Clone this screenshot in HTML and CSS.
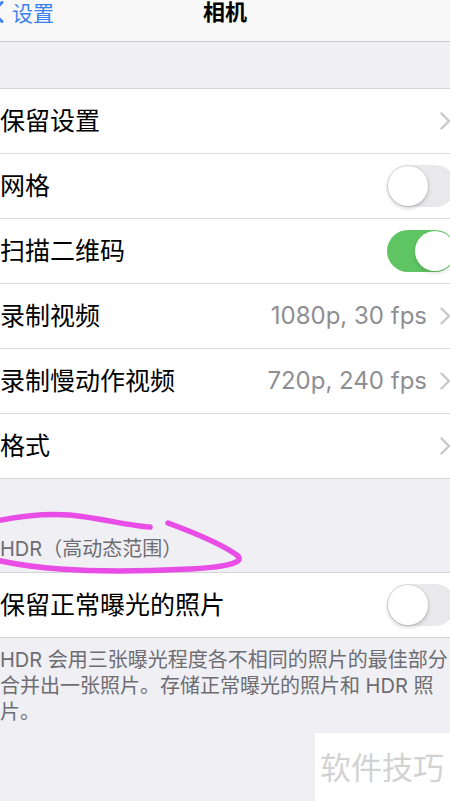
FILE: index.html
```html
<!DOCTYPE html>
<html lang="zh-CN">

<head>
    <meta charset="UTF-8">
    <meta name="viewport" content="width=device-width, initial-scale=1.0">
    <title>相机</title>
    <link rel="stylesheet" href="styles.css">
</head>

<body>
    <div class="screen">
        <header class="navbar">
            <a class="back" href="#">
                <svg class="back-chevron" width="13" height="22" viewBox="0 0 13 22">
                    <path d="M11 1.5 L1.5 11 L11 20.5" fill="none" stroke="#3b82f0" stroke-width="3" stroke-linecap="round" stroke-linejoin="round" />
                </svg>
                设置
            </a>
            <h1 class="title">相机</h1>
        </header>

        <div class="gap-top"></div>

        <ul class="group">
            <li class="cell">
                <span class="label">保留设置</span>
                <span class="accessory">
                    <svg class="chevron" width="11" height="18" viewBox="0 0 11 18">
                        <path d="M1.5 1.5 L9 9 L1.5 16.5" fill="none" stroke="#c7c7cc" stroke-width="2.4" stroke-linecap="round" stroke-linejoin="round" />
                    </svg>
                </span>
            </li>
            <li class="cell">
                <span class="label">网格</span>
                <span class="switch"><span class="knob"></span></span>
            </li>
            <li class="cell">
                <span class="label">扫描二维码</span>
                <span class="switch on"><span class="knob"></span></span>
            </li>
            <li class="cell">
                <span class="label">录制视频</span>
                <span class="accessory">
                    <span class="value">1080p, 30 fps</span>
                    <svg class="chevron" width="11" height="18" viewBox="0 0 11 18">
                        <path d="M1.5 1.5 L9 9 L1.5 16.5" fill="none" stroke="#c7c7cc" stroke-width="2.4" stroke-linecap="round" stroke-linejoin="round" />
                    </svg>
                </span>
            </li>
            <li class="cell">
                <span class="label">录制慢动作视频</span>
                <span class="accessory">
                    <span class="value">720p, 240 fps</span>
                    <svg class="chevron" width="11" height="18" viewBox="0 0 11 18">
                        <path d="M1.5 1.5 L9 9 L1.5 16.5" fill="none" stroke="#c7c7cc" stroke-width="2.4" stroke-linecap="round" stroke-linejoin="round" />
                    </svg>
                </span>
            </li>
            <li class="cell">
                <span class="label">格式</span>
                <span class="accessory">
                    <svg class="chevron" width="11" height="18" viewBox="0 0 11 18">
                        <path d="M1.5 1.5 L9 9 L1.5 16.5" fill="none" stroke="#c7c7cc" stroke-width="2.4" stroke-linecap="round" stroke-linejoin="round" />
                    </svg>
                </span>
            </li>
        </ul>

        <div class="section-header">HDR（高动态范围）</div>

        <ul class="group">
            <li class="cell">
                <span class="label">保留正常曝光的照片</span>
                <span class="switch"><span class="knob"></span></span>
            </li>
        </ul>

        <p class="section-footer">HDR 会用三张曝光程度各不相同的照片的最佳部分<br>合并出一张照片。存储正常曝光的照片和 HDR 照<br>片。</p>

        <!-- hand drawn marker around the HDR header -->
        <svg class="annotation" width="260" height="80" viewBox="0 500 260 80">
            <path d="M-4 521 C 20 516, 45 513, 70 515 C 100 518, 130 526, 150 527" fill="none" stroke="#e84de6" stroke-width="5.5" stroke-linecap="round" />
            <path d="M168 523 C 195 533, 225 546, 238 556 C 244 563, 225 567, 190 569 C 150 571, 100 572, 60 569 C 30 567, 10 563, -4 560" fill="none" stroke="#e84de6" stroke-width="5.5" stroke-linecap="round" />
        </svg>

        <div class="watermark">软件技巧</div>
    </div>
</body>

</html>
```

FILE: styles.css
```css
body {
    margin: 0;
    padding: 0;
    background-color: #efeff4;
    font-family: Inter, "Noto Sans CJK SC", sans-serif;
    overflow: hidden;
}

.screen {
    position: relative;
    width: 450px;
    height: 801px;
    overflow: hidden;
}

.navbar {
    display: grid;
    grid-template-columns: 1fr auto 1fr;
    align-items: start;
    height: 42px;
    box-sizing: border-box;
    background-color: #f8f8f8;
    border-bottom: 1px solid #c8c8cc;
}

.back {
    display: flex;
    align-items: center;
    gap: 8px;
    margin-left: -9px;
    height: 23px;
    font-size: 21px;
    color: #3b82f0;
    text-decoration: none;
}

.title {
    margin: 0;
    height: 24px;
    line-height: 24px;
    font-size: 22px;
    font-weight: 600;
    color: #000;
}

.gap-top {
    height: 46px;
}

.group {
    list-style: none;
    margin: 0;
    padding: 0;
    background-color: #fff;
    border-top: 1px solid #d4d4d8;
    border-bottom: 1px solid #d4d4d8;
}

.cell {
    display: flex;
    justify-content: space-between;
    align-items: center;
    height: 64px;
    overflow: hidden;
}

.cell+.cell {
    border-top: 1px solid #dcdce0;
}

.label {
    padding-bottom: 4px;
    font-size: 25px;
    color: #000;
    white-space: nowrap;
}

.accessory {
    display: flex;
    align-items: center;
    gap: 13px;
    margin-right: -1px;
}

.value {
    padding-bottom: 2px;
    font-size: 24px;
    color: #8e8e93;
}

.chevron {
    display: block;
}

.switch {
    position: relative;
    flex: none;
    width: 69px;
    height: 42px;
    margin-right: -6px;
    border-radius: 21px;
    background-color: #e9e9eb;
    box-sizing: border-box;
}

.knob {
    position: absolute;
    top: 1px;
    left: 1px;
    width: 40px;
    height: 40px;
    border-radius: 50%;
    background-color: #fff;
    box-shadow: 0 2px 4px rgba(0, 0, 0, 0.2), 0 0 0 1px rgba(0, 0, 0, 0.06);
}

.switch.on {
    background-color: #5fc462;
}

.switch.on .knob {
    left: auto;
    right: 1px;
    box-shadow: 0 2px 4px rgba(0, 0, 0, 0.15);
}

.section-header {
    display: flex;
    align-items: flex-end;
    height: 93px;
    box-sizing: border-box;
    padding-bottom: 11px;
    line-height: 24px;
    font-size: 20px;
    color: #6d6d72;
    white-space: nowrap;
}

.section-footer {
    margin: 0;
    padding-top: 9px;
    font-size: 20px;
    line-height: 26px;
    color: #6d6d72;
    white-space: nowrap;
}

.annotation {
    position: absolute;
    left: 0;
    top: 500px;
}

.watermark {
    position: absolute;
    left: 315px;
    top: 733px;
    width: 135px;
    height: 68px;
    box-sizing: border-box;
    padding-left: 5px;
    padding-top: 13px;
    background-color: #fff;
    font-family: "Noto Sans CJK SC", sans-serif;
    font-size: 31px;
    line-height: 40px;
    color: #d2d2d2;
    white-space: nowrap;
}
```
